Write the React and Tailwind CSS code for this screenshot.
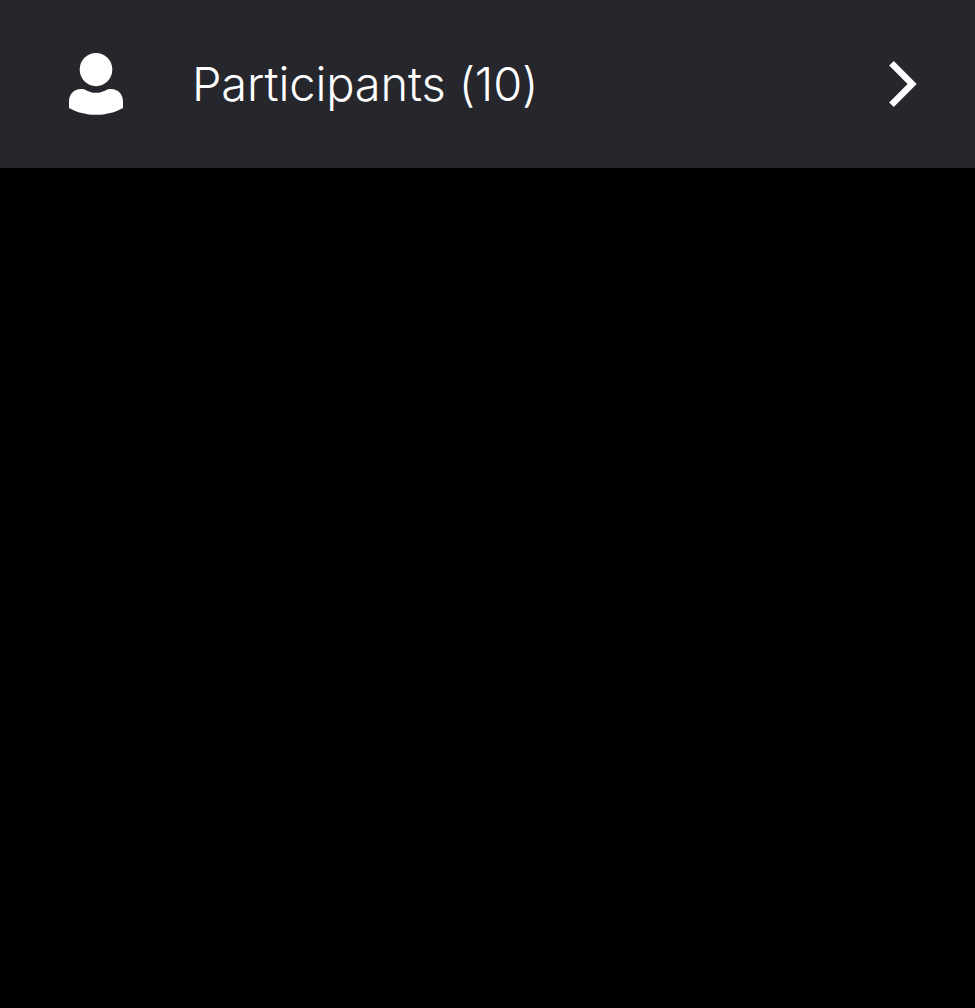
export default function App() {
  return (
    <div className="h-screen w-full overflow-hidden bg-black">
      <button className="flex h-[168px] w-full items-center bg-[#26272c] pl-[64px] pr-[56px] text-left text-white">
        <svg className="size-16 shrink-0" viewBox="0 0 64 64" fill="currentColor" aria-hidden="true">
          <ellipse cx="32" cy="17.6" rx="16.3" ry="16.6" />
          <path d="M5 56V49.5C5 42 10 37 17 37H18.5C21.5 37 24.5 40.8 32 40.8C39.5 40.8 42.5 37 45.5 37H47C54 37 59 42 59 49.5V56C51 60.6 42 62.8 32 62.8C22 62.8 13 60.6 5 56Z" />
        </svg>
        <span className="ml-[64px] grow whitespace-nowrap pb-px font-['Inter',sans-serif] text-[47px] font-light leading-none tracking-[-0.14px] [font-feature-settings:'calt'_0]">
          Participants (10)
        </span>
        <svg className="h-12 w-8 shrink-0" viewBox="0 0 32 48" fill="none" stroke="currentColor" strokeWidth="6.5" aria-hidden="true">
          <path d="M4.5 3.3L25.1 24L4.5 44.7" />
        </svg>
      </button>
    </div>
  );
}
